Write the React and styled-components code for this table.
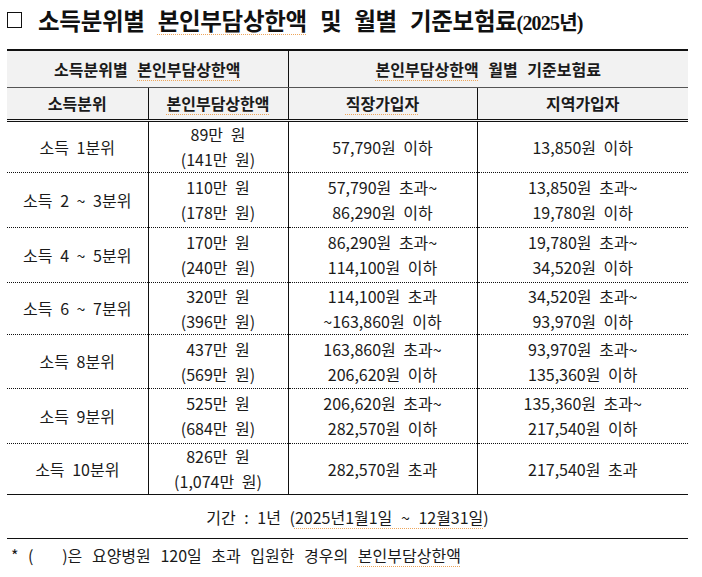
import styled, { createGlobalStyle } from 'styled-components';

const GlobalStyle = createGlobalStyle`
  body {
    margin: 0;
    background: #fff;
    font-family: 'Noto Sans CJK KR', 'Noto Sans', sans-serif;
    color: #1a1a1a;
  }
`;

const Page = styled.div`
  width: 702px;
  height: 577px;
  padding: 3px 14px 0 7px;
  box-sizing: border-box;
`;

const Title = styled.h2`
  display: flex;
  align-items: center;
  gap: 16px;
  height: 33px;
  margin: 0 0 13px;
  font-size: 23.5px;
  font-weight: 700;
  letter-spacing: -0.3px;
  word-spacing: 8px;
  white-space: nowrap;
  color: #111;
`;

const Box = styled.span`
  flex: none;
  width: 13px;
  height: 14px;
  border: 1.5px solid #111;
`;

const Year = styled.span`
  font-family: 'Liberation Serif', 'Noto Sans CJK KR', serif;
  font-size: 20px;
  letter-spacing: -0.8px;
`;

const Mark = styled.span`
  text-decoration: underline dotted #eda55a;
  text-underline-offset: 4px;
  text-decoration-thickness: 1px;
`;

const Table = styled.table`
  width: 681px;
  border-collapse: collapse;
  table-layout: fixed;
  font-size: 16px;
  line-height: 25px;
  text-align: center;
  border-top: 2px solid #111;
`;

const HeadCell = styled.th`
  background: #f2f2f2;
  font-weight: 600;
  font-size: 16px;
  word-spacing: 6px;
  height: ${(p) => p.$h}px;
  padding: 0;
  border-bottom: ${(p) => (p.$last ? '3px double #111' : '1px solid #555')};
  border-left: ${(p) => (p.$first ? 'none' : '1px solid #111')};
`;

const Row = styled.tr`
  height: ${(p) => p.$h}px;
`;

const Cell = styled.td`
  padding: 0;
  white-space: pre;
  word-spacing: 4px;
  border-bottom: ${(p) => (p.$last ? '1px solid #111' : '1px dotted #111')};
  border-left: ${(p) => (p.$first ? 'none' : '1px solid #111')};
`;

const Period = styled.div`
  width: 681px;
  height: 43px;
  display: flex;
  align-items: center;
  justify-content: center;
  font-size: 16px;
  word-spacing: 5px;
  white-space: pre;
  border-bottom: 1px solid #111;
`;

const Note = styled.div`
  padding: 4px 0 0 4px;
  font-size: 16px;
  word-spacing: 6px;
  white-space: pre;
`;

const rows = [
  { label: '소득 1분위', cap: ['89만 원', '(141만 원)'], job: ['57,790원 이하'], area: ['13,850원 이하'], h: 50 },
  { label: '소득 2 ~ 3분위', cap: ['110만 원', '(178만 원)'], job: ['57,790원 초과~', '86,290원 이하'], area: ['13,850원 초과~', '19,780원 이하'], h: 55 },
  { label: '소득 4 ~ 5분위', cap: ['170만 원', '(240만 원)'], job: ['86,290원 초과~', '114,100원 이하'], area: ['19,780원 초과~', '34,520원 이하'], h: 55 },
  { label: '소득 6 ~ 7분위', cap: ['320만 원', '(396만 원)'], job: ['114,100원 초과', '~163,860원 이하'], area: ['34,520원 초과~', '93,970원 이하'], h: 52 },
  { label: '소득 8분위', cap: ['437만 원', '(569만 원)'], job: ['163,860원 초과~', '206,620원 이하'], area: ['93,970원 초과~', '135,360원 이하'], h: 54 },
  { label: '소득 9분위', cap: ['525만 원', '(684만 원)'], job: ['206,620원 초과~', '282,570원 이하'], area: ['135,360원 초과~', '217,540원 이하'], h: 55 },
  { label: '소득 10분위', cap: ['826만 원', '(1,074만 원)'], job: ['282,570원 초과'], area: ['217,540원 초과'], h: 50 },
];

export default function App() {
  return (
    <Page>
      <GlobalStyle />
      <Title>
        <Box />
        <span>
          소득분위별 <Mark>본인부담상한액</Mark> 및 월별 기준보험료<Year>(2025년)</Year>
        </span>
      </Title>
      <Table>
        <colgroup>
          <col style={{ width: 141 }} />
          <col style={{ width: 140 }} />
          <col style={{ width: 189 }} />
          <col style={{ width: 211 }} />
        </colgroup>
        <thead>
          <tr>
            <HeadCell colSpan={2} $first $h={36}>
              소득분위별 <Mark>본인부담상한액</Mark>
            </HeadCell>
            <HeadCell colSpan={2} $h={36}>
              <Mark>본인부담상한액</Mark> 월별 기준보험료
            </HeadCell>
          </tr>
          <tr>
            <HeadCell $first $last $h={31}>소득분위</HeadCell>
            <HeadCell $last $h={31}><Mark>본인부담상한액</Mark></HeadCell>
            <HeadCell $last $h={31}><Mark>직장가입자</Mark></HeadCell>
            <HeadCell $last $h={31}>지역가입자</HeadCell>
          </tr>
        </thead>
        <tbody>
          {rows.map((r, i) => {
            const last = i === rows.length - 1;
            return (
              <Row key={r.label} $h={r.h}>
                <Cell $first $last={last}>{r.label}</Cell>
                <Cell $last={last}>{r.cap.join('\n')}</Cell>
                <Cell $last={last}>{r.job.join('\n')}</Cell>
                <Cell $last={last}>{r.area.join('\n')}</Cell>
              </Row>
            );
          })}
        </tbody>
      </Table>
      <Period>
        {'기간 : 1년 ('}
        <Mark>2025년1월1일 ~ 12월31일</Mark>)
      </Period>
      <Note>
        {'* (   )은 요양병원 120일 초과 입원한 경우의 '}
        <Mark>본인부담상한액</Mark>
      </Note>
    </Page>
  );
}
